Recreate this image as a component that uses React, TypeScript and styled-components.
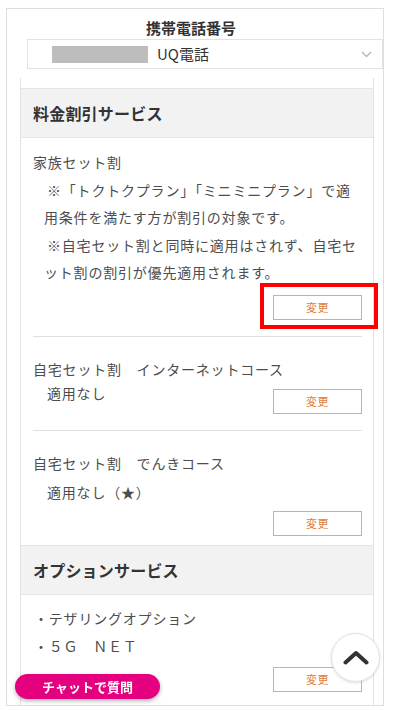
import React from 'react';
import styled, { createGlobalStyle } from 'styled-components';

const GlobalStyle = createGlobalStyle`
    html, body {
        margin: 0;
        padding: 0;
        background: #ffffff;
        overflow: hidden;
    }
    body {
        font-family: "Noto Sans CJK JP", "Noto Sans", sans-serif;
        color: #4d4d4d;
    }
`;

const Frame = styled.div`
    box-sizing: border-box;
    margin: 8px 0 0 6px;
    width: 378px;
    height: 698px;
    border: 1px solid #dedede;
    overflow: hidden;
`;

const Title = styled.div`
    padding: 9px 8px 0 0;
    height: 20px;
    line-height: 20px;
    text-align: center;
    font-size: 15px;
    font-weight: 700;
    color: #333333;
`;

const Select = styled.div`
    box-sizing: border-box;
    display: flex;
    align-items: center;
    margin: 1px 0 0 20px;
    width: 356px;
    height: 30px;
    padding: 0 10px 0 24px;
    border: 1px solid #e2e2e2;
    background: #ffffff;
`;

const Masked = styled.span`
    width: 96px;
    height: 17px;
    background: #bdbdbd;
    margin-right: 9px;
`;

const SelectText = styled.span`
    flex: 1;
    font-size: 15px;
    color: #333333;
    line-height: 20px;
`;

const Panel = styled.div`
    box-sizing: border-box;
    margin: 9px 0 0 13px;
    width: 354px;
    padding-top: 10px;
    border-left: 1px solid #e2e2e2;
    border-right: 1px solid #e2e2e2;
    min-height: 700px;
`;

const SectionHead = styled.div`
    box-sizing: border-box;
    height: 50px;
    padding-left: 12px;
    display: flex;
    align-items: center;
    background: #f2f2f2;
    border-top: 1px solid #e6e6e6;
    border-bottom: 1px solid #e6e6e6;
    font-size: 16px;
    font-weight: 700;
    color: #333333;
    letter-spacing: 0.2px;
`;

interface ItemProps {
    $top: number;
    $bottom: number;
    $divider?: boolean;
}

const Item = styled.div<ItemProps>`
    margin: 0 11px 0 12px;
    padding: ${({ $top }) => $top}px 0 ${({ $bottom }) => $bottom}px;
    border-bottom: ${({ $divider }) => ($divider ? '1px solid #e0e0e0' : 'none')};
    font-size: 14px;
    letter-spacing: 0.8px;
    color: #4d4d4d;
`;

interface LineProps {
    $lh: number;
}

const ItemTitle = styled.div<LineProps>`
    line-height: ${({ $lh }) => $lh}px;
    white-space: nowrap;
`;

const Notes = styled.div`
    padding-left: 11px;
    line-height: 27.5px;
    white-space: nowrap;
`;

const Note = styled.p`
    margin: 0;
    text-indent: 3px;
`;

const ValueRow = styled.div`
    display: flex;
    justify-content: space-between;
    align-items: flex-start;
`;

interface ValueProps {
    $gap?: number;
}

const Value = styled.div<ValueProps>`
    padding-left: 14px;
    margin-top: ${({ $gap }) => $gap ?? 0}px;
    line-height: 24px;
`;

const OptionList = styled.div`
    line-height: 28px;
    padding-left: 1px;
`;

interface ActionsProps {
    $gap: number;
}

const Actions = styled.div<ActionsProps>`
    display: flex;
    justify-content: flex-end;
    margin-top: ${({ $gap }) => $gap}px;
`;

const Anchor = styled.div`
    position: relative;
`;

const ChangeButton = styled.button`
    box-sizing: border-box;
    width: 89px;
    height: 25px;
    padding: 0;
    border: 1px solid #e0a883;
    background: #ffffff;
    color: #de7d3c;
    font-family: "Noto Sans CJK JP", sans-serif;
    font-size: 11px;
    letter-spacing: 0.5px;
    cursor: pointer;
`;

const Highlight = styled.div`
    position: absolute;
    left: -13px;
    top: -12px;
    right: -16px;
    bottom: -9px;
    border: 4px solid #ff0000;
    pointer-events: none;
`;

const ChatButton = styled.button`
    position: fixed;
    left: 15px;
    bottom: 12px;
    width: 145px;
    height: 25px;
    border: none;
    border-radius: 13px;
    background: #e4007f;
    color: #ffffff;
    font-family: "Noto Sans CJK JP", sans-serif;
    font-size: 13px;
    font-weight: 700;
    box-shadow: 0 2px 4px rgba(0, 0, 0, 0.3);
    padding: 0;
`;

const TopButton = styled.button`
    position: fixed;
    right: 13px;
    bottom: 29px;
    box-sizing: border-box;
    width: 49px;
    height: 49px;
    border-radius: 50%;
    border: 1px solid #e0e0e0;
    background: #ffffff;
    box-shadow: 0 1px 3px rgba(0, 0, 0, 0.12);
    display: flex;
    align-items: center;
    justify-content: center;
    padding: 0;
`;

const Change = ({ marked }: { marked?: boolean }) => (
    <Anchor>
        <ChangeButton>変更</ChangeButton>
        {marked && <Highlight />}
    </Anchor>
);

const App = () => {
    return (
        <>
            <GlobalStyle />
            <Frame>
                <Title>携帯電話番号</Title>
                <Select>
                    <Masked />
                    <SelectText>UQ電話</SelectText>
                    <svg width="11" height="7" viewBox="0 0 11 7">
                        <path d="M1 1 L5.5 5.5 L10 1" fill="none" stroke="#b5b5b5" strokeWidth="1.3" />
                    </svg>
                </Select>
                <Panel>
                    <SectionHead>料金割引サービス</SectionHead>
                    <Item $top={11} $bottom={16} $divider>
                        <ItemTitle $lh={27.5}>家族セット割</ItemTitle>
                        <Notes>
                            <Note>
                                ※「トクトクプラン」「ミニミニプラン」で適
                                <br />
                                用条件を満たす方が割引の対象です。
                            </Note>
                            <Note>
                                ※自宅セット割と同時に適用はされず、自宅セ
                                <br />
                                ット割の割引が優先適用されます。
                            </Note>
                        </Notes>
                        <Actions $gap={8}>
                            <Change marked />
                        </Actions>
                    </Item>
                    <Item $top={20} $bottom={16} $divider>
                        <ItemTitle $lh={24}>自宅セット割　インターネットコース</ItemTitle>
                        <ValueRow>
                            <Value>適用なし</Value>
                            <Actions $gap={8}>
                                <Change />
                            </Actions>
                        </ValueRow>
                    </Item>
                    <Item $top={20} $bottom={9}>
                        <ItemTitle $lh={24}>自宅セット割　でんきコース</ItemTitle>
                        <Value $gap={5}>適用なし（★）</Value>
                        <Actions $gap={7}>
                            <Change />
                        </Actions>
                    </Item>
                    <SectionHead>オプションサービス</SectionHead>
                    <Item $top={9} $bottom={12}>
                        <OptionList>
                            <div>・テザリングオプション</div>
                            <div>・５Ｇ　ＮＥＴ</div>
                        </OptionList>
                        <Actions $gap={7}>
                            <Change />
                        </Actions>
                    </Item>
                </Panel>
            </Frame>
            <ChatButton>チャットで質問</ChatButton>
            <TopButton aria-label="ページトップへ">
                <svg width="26" height="15" viewBox="0 0 26 15">
                    <path d="M2.5 12.5 L13 3 L23.5 12.5" fill="none" stroke="#333333" strokeWidth="4" strokeLinecap="round" strokeLinejoin="round" />
                </svg>
            </TopButton>
        </>
    );
};

export default App;
